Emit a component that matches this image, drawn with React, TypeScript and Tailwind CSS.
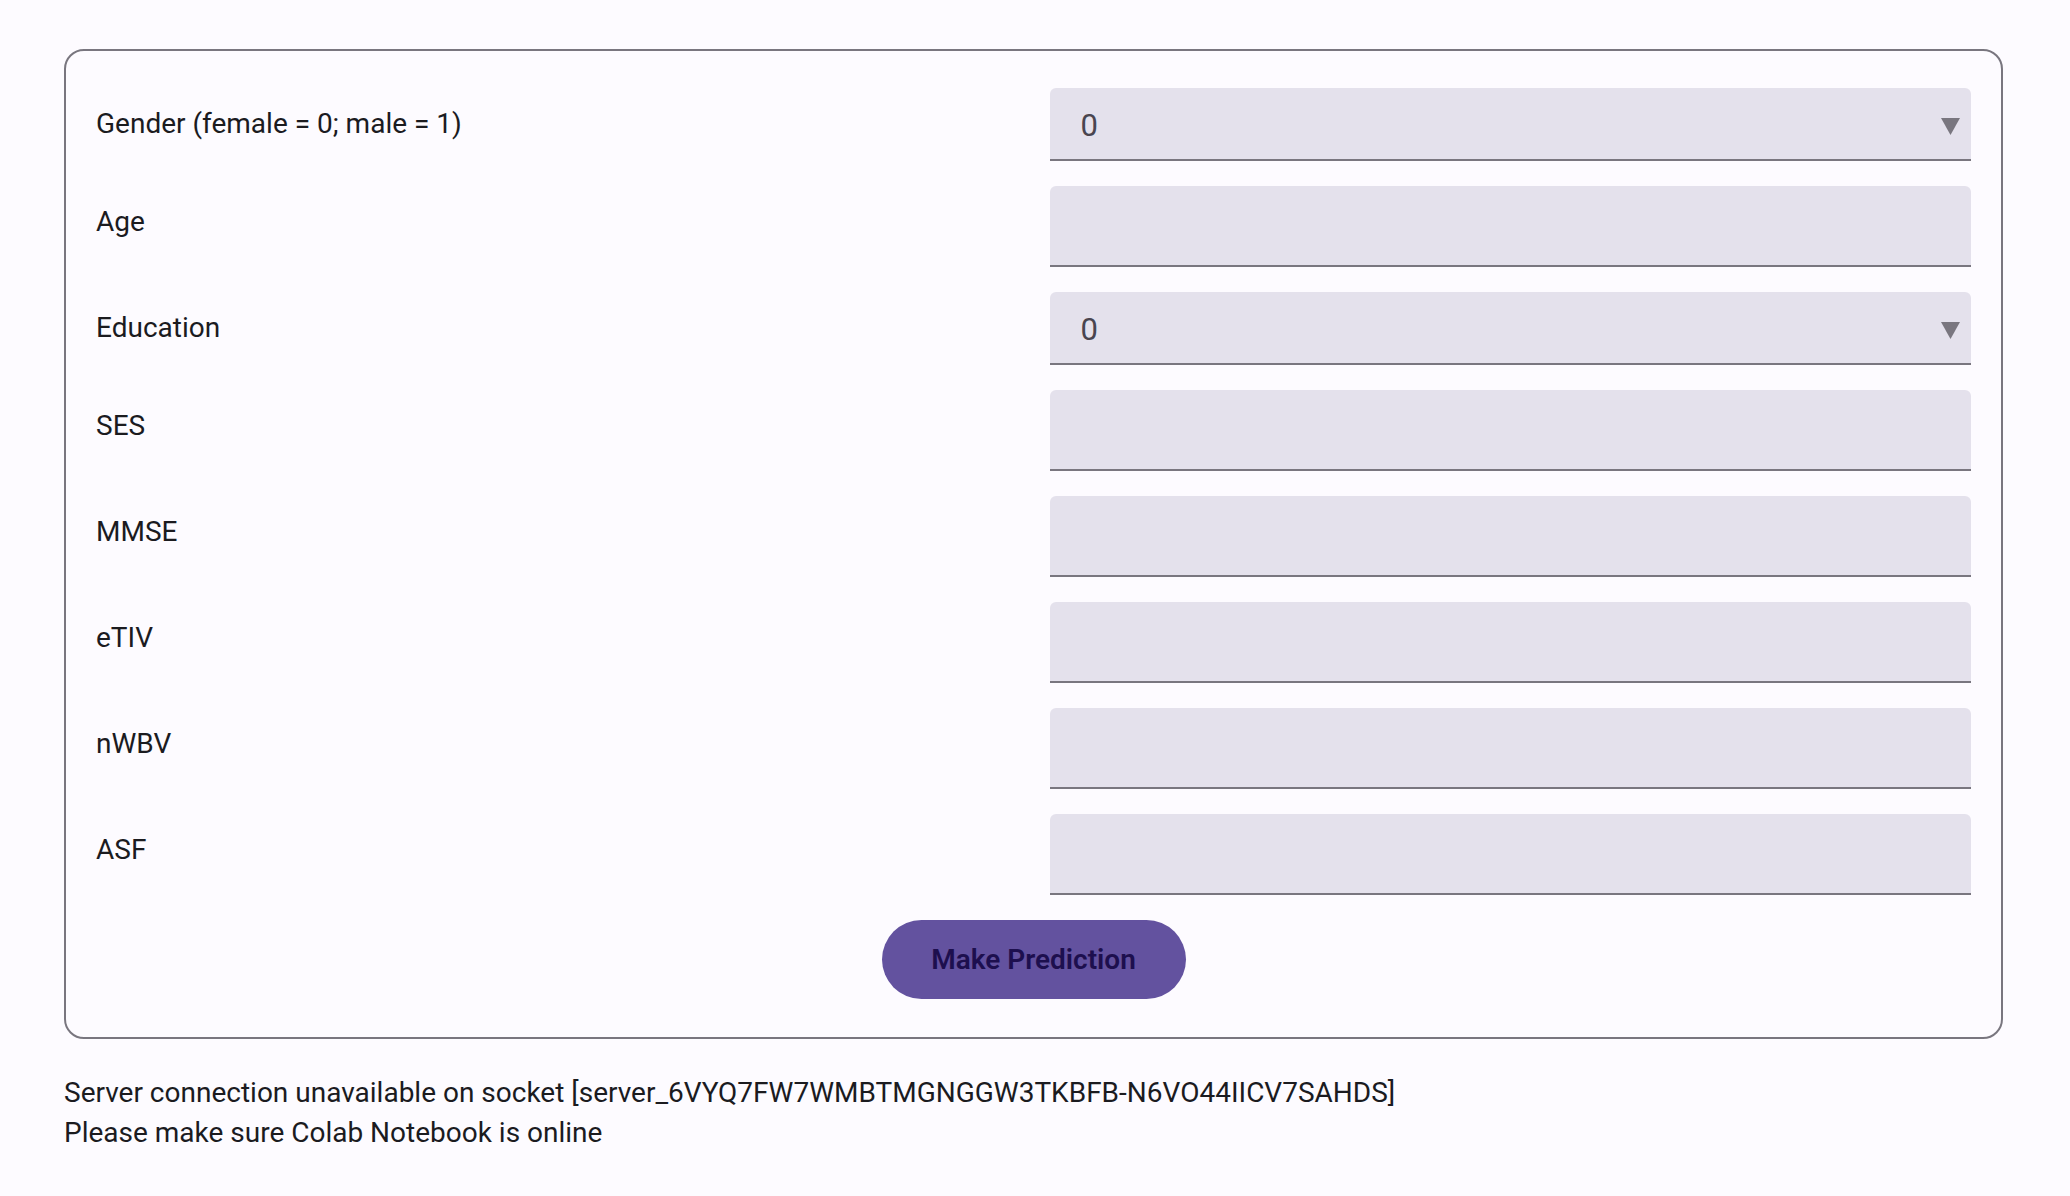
const fields: { label: string; kind: "select" | "input" }[] = [
  { label: "Gender (female = 0; male = 1)", kind: "select" },
  { label: "Age", kind: "input" },
  { label: "Education", kind: "select" },
  { label: "SES", kind: "input" },
  { label: "MMSE", kind: "input" },
  { label: "eTIV", kind: "input" },
  { label: "nWBV", kind: "input" },
  { label: "ASF", kind: "input" },
];

function SelectField() {
  return (
    <div className="h-[73px] bg-[#e4e1ec] rounded-t-[6px] border-b-2 border-[#79767f] flex items-center justify-between pl-[31px] pr-[11px] pt-[5px]">
      <span className="text-[31px] text-[#49454f]">0</span>
      <svg width="19" height="17" viewBox="0 0 19 17">
        <polygon points="0,0 19,0 9.5,17" fill="#79767f" />
      </svg>
    </div>
  );
}

function InputField() {
  return (
    <div className="h-[81px] bg-[#e4e1ec] rounded-t-[6px] border-b-2 border-[#79767f]" />
  );
}

export default function App() {
  return (
    <div
      className="min-h-screen bg-[#fdfbff] text-[#1b1b1f] pl-[64px] pr-[67px] pt-[49px]"
      style={{ fontFamily: "Roboto, 'Noto Sans', sans-serif" }}
    >
      <div className="border-2 border-[#79767f] rounded-[20px] px-[30px] pt-[37px] pb-[38px] flex flex-col gap-[25px]">
        {fields.map((f) => (
          <div key={f.label} className="grid grid-cols-2 gap-x-[32px]">
            <div className="text-[28px] leading-[40px] pt-[16px]">{f.label}</div>
            {f.kind === "select" ? <SelectField /> : <InputField />}
          </div>
        ))}

        <div className="flex justify-center">
          <button className="w-[304px] h-[79px] rounded-full bg-[#63529f] text-[#1d0f4e] text-[28px] font-semibold">
            Make Prediction
          </button>
        </div>
      </div>

      <div className="mt-[34px] text-[28px] leading-[40px]">
        <p>Server connection unavailable on socket [server_6VYQ7FW7WMBTMGNGGW3TKBFB-N6VO44IICV7SAHDS]</p>
        <p>Please make sure Colab Notebook is online</p>
      </div>
    </div>
  );
}
